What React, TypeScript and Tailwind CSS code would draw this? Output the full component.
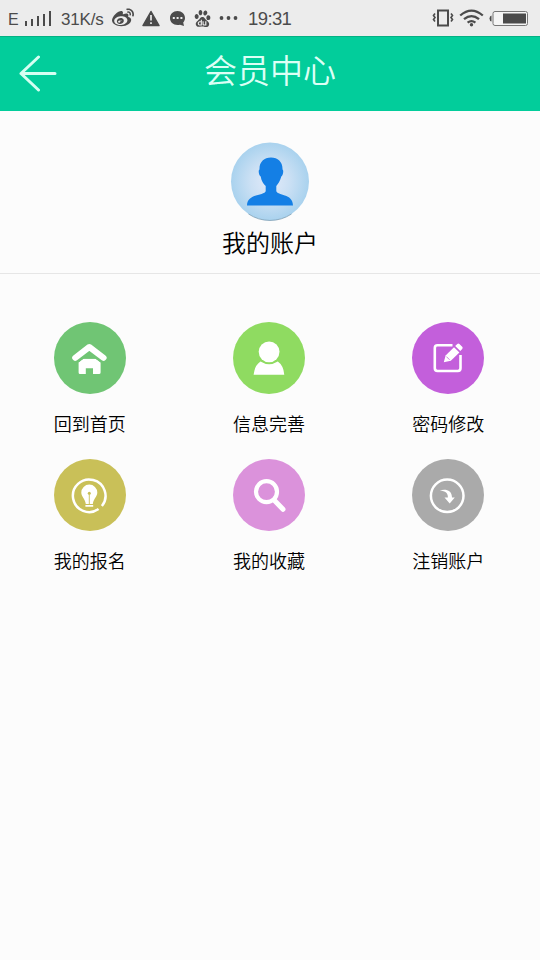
import type { ReactNode } from 'react'
import { FaWeibo } from 'react-icons/fa'
import { SiBaidu } from 'react-icons/si'

type MenuItem = {
  label: string
  color: string
  icon: ReactNode
}

const menuItems: MenuItem[] = [
  {
    label: '回到首页',
    color: 'bg-[#70c574]',
    icon: (
      <>
        <path d="M21.2 35.8 35.3 25 49.6 35.8" fill="none" stroke="#fff" strokeWidth="6" strokeLinecap="round" strokeLinejoin="round" />
        <path d="M24.6 40.5 29.5 36.8H41.5L46.6 40.5V50.5Q46.6 52 45 52H39V46.3H31.8V52H26Q24.6 52 24.6 50.5Z" fill="#fff" />
        <path d="M25 39.8Q27.5 36.6 30 36.3H41Q43.500 36.600 46.200 39.800" fill="none" stroke="#70c574" strokeWidth="0.8" />
      </>
    ),
  },
  {
    label: '信息完善',
    color: 'bg-[#8fdb61]',
    icon: (
      <>
        <circle cx="36.1" cy="29.8" r="10.4" fill="#fff" />
        <path d="M27.5 39.6Q36 45 44.8 39.6 50.5 43.5 51.3 52.8H20.6Q21.5 43.5 27.5 39.6Z" fill="#fff" />
      </>
    ),
  },
  {
    label: '密码修改',
    color: 'bg-[#c35fdb]',
    icon: (
      <>
        <path d="M40.5 23.2H25.5Q22.8 23.2 22.8 25.9V46.3Q22.8 49 25.5 49H45.8Q48.5 49 48.5 46.3V33" fill="none" stroke="#fff" strokeWidth="2.6" />
        <path d="M31.8 40.3 33.6 33.6 42 25.2 47.4 30.6 38.8 38.7Z" fill="#fff" />
        <path d="M43.2 24 45.3 22Q46.3 21 47.4 22L50.2 24.8Q51.2 25.8 50.2 26.9L48.3 29Z" fill="#fff" />
        <path d="M34.4 34.6 37.6 37.8" stroke="#c35fdb" strokeWidth="0.8" />
      </>
    ),
  },
  {
    label: '我的报名',
    color: 'bg-[#c9c058]',
    icon: (
      <>
        <path d="M44.6 50.1A16.3 16.3 0 1 1 47.9 47" fill="none" stroke="#fff" strokeWidth="2.5" />
        <path d="M35.3 25.6A8 8 0 0 1 43.3 33.6C43.3 38 39.6 39.5 38.8 45H31.8C31 39.5 27.3 38 27.3 33.6A8 8 0 0 1 35.3 25.6ZM31.4 46H39.2V47.8H31.4Z" fill="#fff" />
        <circle cx="35.3" cy="34.3" r="1.5" fill="#c9c058" />
        <path d="M35.3 34V45" stroke="#c9c058" strokeWidth="0.9" />
      </>
    ),
  },
  {
    label: '我的收藏',
    color: 'bg-[#db92db]',
    icon: (
      <>
        <circle cx="33.5" cy="32.7" r="10.5" fill="none" stroke="#fff" strokeWidth="4.2" />
        <path d="M41.5 41.5 50 50.3" stroke="#fff" strokeWidth="5" strokeLinecap="round" />
      </>
    ),
  },
  {
    label: '注销账户',
    color: 'bg-[#aaa]',
    icon: (
      <>
        <circle cx="35.2" cy="36.8" r="16.3" fill="none" stroke="#fff" strokeWidth="2.5" />
        <path d="M27.8 31.6C32.5 29.6 40 30.4 40 38.6H42.8L37.7 44.6 32.5 38.6H35.9C36.2 34.5 33.5 32 27.8 31.6Z" fill="#fff" />
      </>
    ),
  },
]

function StatusBar() {
  return (
    <div className="flex h-[36px] items-center bg-[#ececec] text-[#4b4b4b] font-['Liberation_Sans',sans-serif]">
      <span className="ml-2 mt-[4px] w-[11px] text-[16px] leading-none">E</span>
      <svg className="ml-[5px] h-[17px] w-[28px]" viewBox="0 0 28 17" fill="#4b4b4b">
        <path d="M1 11h2v5H1zM7 9h2v7H7zM13 6h2v10h-2zM19 4h2v12h-2zM25 1h2v15h-2z" />
      </svg>
      <span className="ml-[9px] mt-[2px] w-[43px] whitespace-nowrap text-[17px] leading-none tracking-[-0.2px]">31K/s</span>
      <FaWeibo className="ml-[8px] size-[22px]" />
      <svg className="ml-[8px] h-[17px] w-[18px]" viewBox="0 0 18 17">
        <path d="M9 1.5 17 15.5H1Z" fill="#4b4b4b" stroke="#4b4b4b" strokeWidth="1.5" strokeLinejoin="round" />
        <path d="M9 5v5.5M9 12.3v1.8" stroke="#ececec" strokeWidth="1.7" />
      </svg>
      <svg className="ml-[9px] h-[17px] w-[17px]" viewBox="0 0 17 17">
        <path d="M8.5 1C12.8 1 16 4.1 16 8c0 2-.9 3.4-1.8 4.6L15 16l-4-1.3C5 15.8 1 12.6 1 8 1 4.1 4.2 1 8.5 1Z" fill="#4b4b4b" />
        <path d="M3.8 7h2v2h-2zM7.6 7h2v2h-2zM11.4 7h2v2h-2z" fill="#ececec" />
      </svg>
      <SiBaidu className="ml-[8px] size-[17px]" />
      <svg className="ml-[8px] h-[4px] w-[19px]" viewBox="0 0 19 4" fill="#4b4b4b">
        <circle cx="2.5" cy="2" r="1.9" />
        <circle cx="9.5" cy="2" r="1.9" />
        <circle cx="16.5" cy="2" r="1.9" />
      </svg>
      <span className="ml-[10px] mt-[2px] text-[18.5px] leading-none tracking-[-0.6px]">19:31</span>

      <svg className="ml-auto h-[18px] w-[22px]" viewBox="0 0 22 18" fill="none" stroke="#4b4b4b">
        <path d="M6 1.5h10v15H6z" strokeWidth="2" />
        <path d="M3 4.5 1.5 6.5 3 8.5 1.5 10.5 3 12.5M19 4.5l1.5 2L19 8.5l1.5 2-1.5 2" strokeWidth="1.6" />
      </svg>
      <svg className="ml-[5px] h-[18px] w-[25px]" viewBox="0 0 25 18" fill="none" stroke="#4b4b4b" strokeWidth="2.3">
        <path d="M1.2 6.5Q12.5-3.2 23.8 6.5M5 10.2q7.5-6.2 15 0M8.6 13.6q3.9-3 7.8 0" />
        <circle cx="12.5" cy="15.7" r="1.7" fill="#4b4b4b" stroke="none" />
      </svg>
      <svg className="mr-[11px] ml-[5px] h-[17px] w-[40px]" viewBox="0 0 40 17">
        <path d="M2.5 5.5v6Q.5 11 .5 8.5t2-3Z" fill="#4b4b4b" />
        <rect x="4" y="1.5" width="34.5" height="14" rx="2" fill="#f5f5f5" stroke="#777" />
        <path d="M14 3.5h23v10H14z" fill="#4b4b4b" />
      </svg>
    </div>
  )
}

function Header() {
  return (
    <header className="grid h-[75px] grid-cols-[60px_1fr_60px] items-center border-t border-[#04b184] bg-[#02cd9b]">
      <button aria-label="返回" className="ml-[17px]">
        <svg className="h-[38px] w-[40px]" viewBox="0 0 40 38" fill="none" stroke="#d5fff2" strokeWidth="3" strokeLinecap="round" strokeLinejoin="round">
          <path d="M21.5 2 4 18.5l17.5 16.5M4 18.5h34" />
        </svg>
      </button>
      <h1 className="pb-[10px] text-center text-[33px] leading-none font-[350] text-[#dcfff5]">会员中心</h1>
    </header>
  )
}

function Account() {
  return (
    <section className="flex h-[163px] flex-col items-center border-b border-[#e6e6e6] pt-[31px]">
      <svg className="size-[80px] pb-px" viewBox="0 0 79 79">
        <defs>
          <radialGradient id="avatar">
            <stop offset="0" stopColor="#e2eaf9" />
            <stop offset="0.5" stopColor="#cbe0f4" />
            <stop offset="1" stopColor="#a9d2ee" />
          </radialGradient>
        </defs>
        <circle cx="39.5" cy="39.5" r="39" fill="url(#avatar)" />
        <path d="M18 72A39 39 0 0 0 61 72" fill="none" stroke="#7193aa" strokeWidth="0.7" />
        <path
          d="M40.5 15.5C47.5 15.5 52.3 20 52 27.5 53.5 28 52.5 33.5 50.8 34.5 49.7 39 47.5 42 45.8 44V49C46.5 54 62.5 51 62.5 63.5H16.5C16.5 51 34.5 54 35.2 49V44C32.8 42 30.8 38.5 30.2 34.5 28.3 33.5 27.5 28 29 27.5 28.7 20 33.5 15.5 40.5 15.5Z"
          fill="#147fe5"
        />
      </svg>
      <p className="mt-[8px] text-[24px] leading-none font-[350] text-black">我的账户</p>
    </section>
  )
}

export default function App() {
  return (
    <div className="min-h-screen bg-[#fcfcfc] font-['Noto_Sans_CJK_SC',sans-serif]">
      <StatusBar />
      <Header />
      <Account />
      <main className="grid w-[538px] grid-cols-3 gap-y-[25px] pt-[48px]">
        {menuItems.map((item) => (
          <button key={item.label} className="flex h-[112px] flex-col items-center">
            <span className={`size-[72px] rounded-full ${item.color}`}>
              <svg className="size-full" viewBox="0 0 72 72">{item.icon}</svg>
            </span>
            <span className="mt-[20px] text-[18px] leading-none font-[350] text-black">{item.label}</span>
          </button>
        ))}
      </main>
    </div>
  )
}
